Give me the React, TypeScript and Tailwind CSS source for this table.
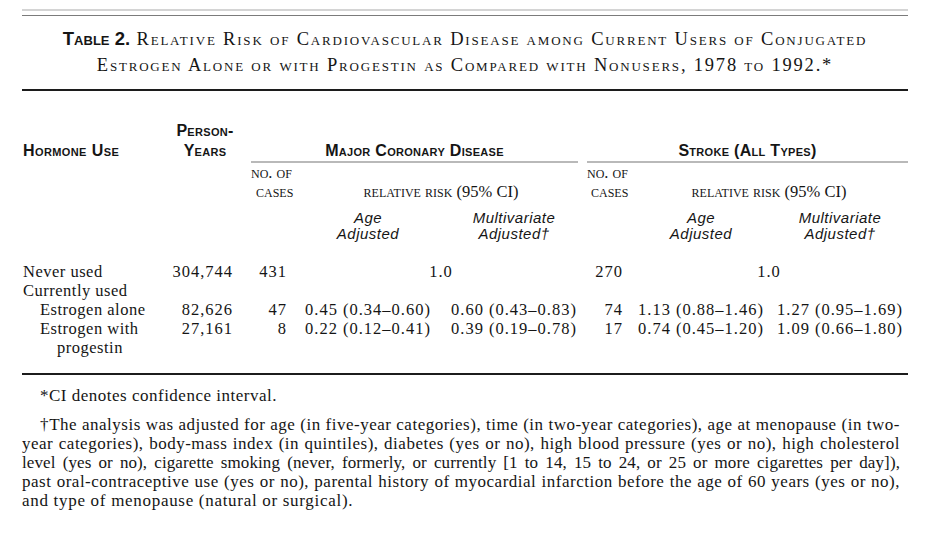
import React from "react";

const serif = "font-['Liberation_Serif','Times_New_Roman',serif]";
const sans = "font-['Liberation_Sans',Arial,sans-serif]";
const grid = "grid grid-cols-[148px_70px_55px_146px_146px_43px_142px_136px]";

function Num({ children, cls = "" }: { children: React.ReactNode; cls?: string }) {
  return <div className={`whitespace-nowrap tracking-[1px] ${cls}`}>{children}</div>;
}

export default function App() {
  return (
    <div className={`min-h-[546px] w-[936px] bg-white text-[#151515] ${serif}`}>
      <div className="ml-[22px] w-[886px] pt-[9px]">
        <div className="h-[2px] bg-[#d4d4d4]" />
        <div className="mt-[4px] h-[1px] bg-[#7b7b7b]" />

        <div className="mt-[10px] text-center text-[18.5px] leading-[26px] [font-variant-caps:small-caps] tracking-[1.8px]">
          <div className="whitespace-nowrap">
            <span className={`${sans} font-bold tracking-[0px]`}>Table 2.</span> Relative Risk of Cardiovascular Disease among Current Users of Conjugated
          </div>
          <div className="whitespace-nowrap">
            Estrogen Alone or with Progestin as Compared with Nonusers, 1978 to 1992.*
          </div>
        </div>

        <div className="mt-[11px] h-[2px] bg-[#1c1c1c]" />

        {/* header */}
        <div className={`${grid} mt-[30px]`}>
          <div className={`self-end pb-[2px] pl-[1px] text-[16px] leading-[20px] font-bold tracking-[0.4px] ${sans} [font-variant-caps:small-caps]`}>
            Hormone Use
          </div>
          <div className={`pb-[2px] text-center text-[16px] leading-[20px] font-bold tracking-[0.3px] ${sans} [font-variant-caps:small-caps]`}>
            <div>Person-</div>
            <div>Years</div>
          </div>
          <div className="col-span-3 self-end pl-[11px] pr-[9px]">
            <div className={`border-b-[2px] border-[#b9b9b9] text-center text-[16px] leading-[20px] font-bold tracking-[0.3px] ${sans} [font-variant-caps:small-caps]`}>
              Major Coronary Disease
            </div>
          </div>
          <div className="col-span-3 self-end">
            <div className={`border-b-[2px] border-[#b9b9b9] text-center text-[16px] leading-[20px] font-bold tracking-[0.3px] ${sans} [font-variant-caps:small-caps]`}>
              Stroke (All Types)
            </div>
          </div>

          {/* row C */}
          <div className="col-span-2" />
          <div className="pl-[11px] text-[16.5px] leading-[19px] [font-variant-caps:small-caps] whitespace-nowrap">
            <div>no. of</div>
            <div className="pl-[5px]">cases</div>
          </div>
          <div className="col-span-2 pt-[19px] text-center text-[16.5px] leading-[19px] [font-variant-caps:small-caps] whitespace-nowrap">
            relative risk (95% CI)
          </div>
          <div className="text-[16.5px] leading-[19px] [font-variant-caps:small-caps] whitespace-nowrap">
            <div>no. of</div>
            <div className="pl-[4px]">cases</div>
          </div>
          <div className="col-span-2 pt-[19px] text-center text-[16.5px] leading-[19px] [font-variant-caps:small-caps] whitespace-nowrap">
            relative risk (95% CI)
          </div>

          {/* row D */}
          <div className="col-span-3" />
          <div className={`pt-[9px] text-center text-[15px] leading-[16px] italic tracking-[0.5px] ${sans}`}>
            <div>Age</div>
            <div>Adjusted</div>
          </div>
          <div className={`pt-[9px] text-center text-[15px] leading-[16px] italic tracking-[0.5px] ${sans}`}>
            <div>Multivariate</div>
            <div>Adjusted†</div>
          </div>
          <div />
          <div className={`pt-[9px] text-center text-[15px] leading-[16px] italic tracking-[0.5px] ${sans}`}>
            <div>Age</div>
            <div>Adjusted</div>
          </div>
          <div className={`pt-[9px] text-center text-[15px] leading-[16px] italic tracking-[0.5px] ${sans}`}>
            <div>Multivariate</div>
            <div>Adjusted†</div>
          </div>
        </div>

        {/* data */}
        <div className={`${grid} mt-[20px] text-[16.5px] leading-[19px]`}>
          <div className="pl-[1px] tracking-[0.5px] whitespace-nowrap">Never used</div>
          <Num cls="text-right pr-[7px]">304,744</Num>
          <Num cls="text-right pr-[8px]">431</Num>
          <Num cls="col-span-2 text-center">1.0</Num>
          <Num cls="text-right pr-[7px]">270</Num>
          <Num cls="col-span-2 text-center">1.0</Num>

          <div className="col-span-8 pl-[1px] tracking-[0.5px] whitespace-nowrap">Currently used</div>

          <div className="pl-[18px] tracking-[0.5px] whitespace-nowrap">Estrogen alone</div>
          <Num cls="text-right pr-[7px]">82,626</Num>
          <Num cls="text-right pr-[8px]">47</Num>
          <Num cls="text-center">0.45 (0.34–0.60)</Num>
          <Num cls="text-center">0.60 (0.43–0.83)</Num>
          <Num cls="text-right pr-[7px]">74</Num>
          <Num cls="text-center">1.13 (0.88–1.46)</Num>
          <Num cls="text-center">1.27 (0.95–1.69)</Num>

          <div className="pl-[18px] tracking-[0.5px] whitespace-nowrap">
            <div>Estrogen with</div>
            <div className="pl-[17px]">progestin</div>
          </div>
          <Num cls="text-right pr-[7px]">27,161</Num>
          <Num cls="text-right pr-[8px]">8</Num>
          <Num cls="text-center">0.22 (0.12–0.41)</Num>
          <Num cls="text-center">0.39 (0.19–0.78)</Num>
          <Num cls="text-right pr-[7px]">17</Num>
          <Num cls="text-center">0.74 (0.45–1.20)</Num>
          <Num cls="text-center">1.09 (0.66–1.80)</Num>
        </div>

        <div className="mt-[16px] h-[2px] bg-[#1c1c1c]" />

        {/* footnotes */}
        <div className="mt-[11px] w-[878px] text-[17px] leading-[19px] tracking-[0.5px]">
          <p className="pl-[18px] whitespace-nowrap">*CI denotes confidence interval.</p>
          <div className="mt-[10px]">
            <p className="pl-[18px] whitespace-nowrap text-justify [text-align-last:justify]">
              †The analysis was adjusted for age (in five-year categories), time (in two-year categories), age at menopause (in two-
            </p>
            <p className="whitespace-nowrap text-justify [text-align-last:justify]">
              year categories), body-mass index (in quintiles), diabetes (yes or no), high blood pressure (yes or no), high cholesterol
            </p>
            <p className="whitespace-nowrap text-justify [text-align-last:justify] tracking-[0.1px]">
              level (yes or no), cigarette smoking (never, formerly, or currently [1 to 14, 15 to 24, or 25 or more cigarettes per day]),
            </p>
            <p className="whitespace-nowrap text-justify [text-align-last:justify]">
              past oral-contraceptive use (yes or no), parental history of myocardial infarction before the age of 60 years (yes or no),
            </p>
            <p className="whitespace-nowrap tracking-[0.7px]">and type of menopause (natural or surgical).</p>
          </div>
        </div>
      </div>
    </div>
  );
}
